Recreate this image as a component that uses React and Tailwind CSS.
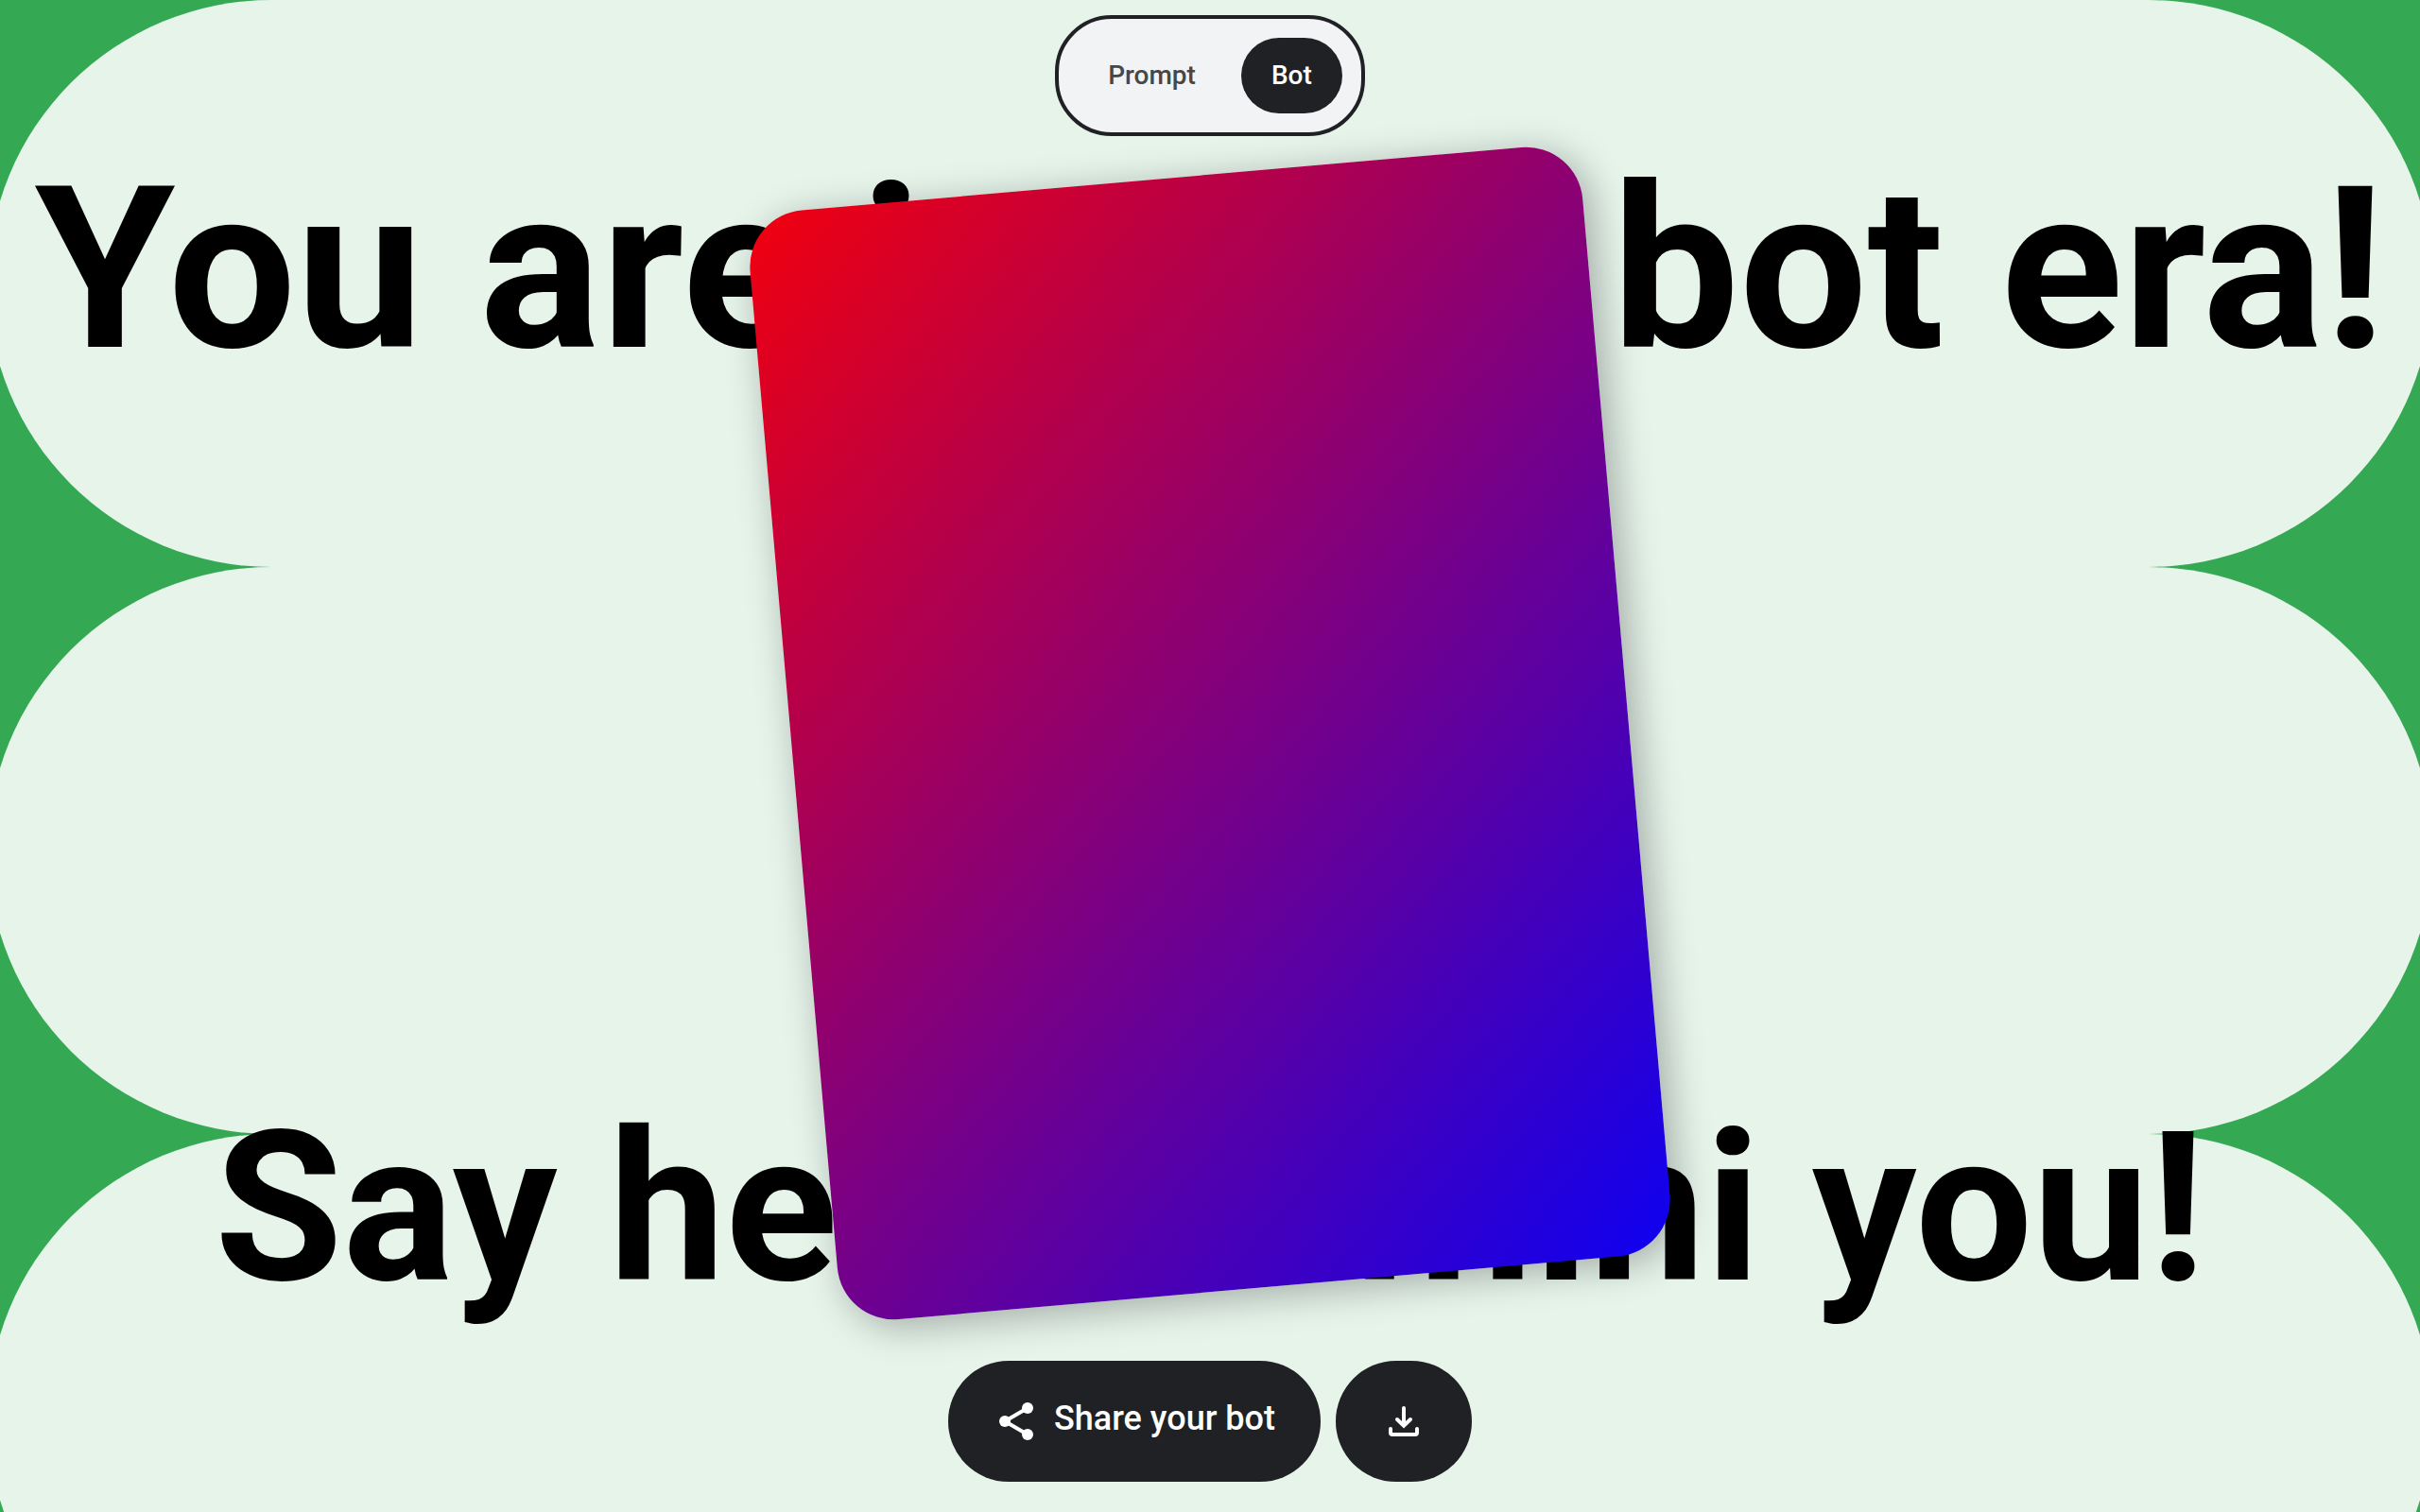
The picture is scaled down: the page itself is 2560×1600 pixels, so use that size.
function ShareIcon() {
  return (
    <svg viewBox="0 0 24 24" className="size-12 shrink-0" fill="none" aria-hidden="true">
      <path d="M18 5 6 12l12 7" stroke="currentColor" strokeWidth="2" />
      <circle cx="18" cy="5" r="3" fill="currentColor" />
      <circle cx="6" cy="12" r="3" fill="currentColor" />
      <circle cx="18" cy="19" r="3" fill="currentColor" />
    </svg>
  );
}

function DownloadIcon() {
  return (
    <svg
      viewBox="0 0 24 24"
      className="size-12"
      fill="none"
      stroke="currentColor"
      strokeWidth="2"
      strokeLinecap="round"
      aria-hidden="true"
    >
      <path d="M12 5v9M8.5 11l3.5 3.4 3.5-3.4" />
      <path d="M5 16v2q0 1 1 1h12q1 0 1-1v-2" />
    </svg>
  );
}

function Backdrop() {
  return (
    <div className="col-start-1 row-start-1 -mx-[0.5%] flex flex-col overflow-hidden">
      <div className="h-[600px] shrink-0 rounded-full bg-[#e6f4ea]" />
      <div className="h-[600px] shrink-0 rounded-full bg-[#e6f4ea]" />
      <div className="h-[600px] shrink-0 rounded-full bg-[#e6f4ea]" />
    </div>
  );
}

export default function App() {
  return (
    <main className="grid h-screen grid-cols-1 grid-rows-1 overflow-hidden bg-[#34a853] font-['Roboto',sans-serif]">
      <Backdrop />

      <div className="col-start-1 row-start-1 flex min-h-0 flex-col items-center justify-between pt-[165px] pb-[211px] font-bold whitespace-nowrap text-black">
        <h1 className="text-[240px] leading-none">You are in your bot era!</h1>
        <h2 className="text-[220px] leading-none">Say hello to mini you!</h2>
      </div>

      <div className="col-start-1 row-start-1 flex min-h-0 items-center justify-center pb-[49px]">
        <div className="aspect-[3/4] h-[1178px] -rotate-5 rounded-[60px] bg-[linear-gradient(135deg,#ff0000_-6%,#0000ff_106%)] shadow-[8px_8px_40px_rgba(0,0,0,0.3)]" />
      </div>

      <div className="relative col-start-1 row-start-1 flex min-h-0 flex-col items-center justify-between pt-4 pb-8 font-medium">
        <nav className="flex gap-4 rounded-[60px] border-4 border-[#202124] bg-[#f1f3f4] p-5 text-[28px] leading-10">
          <button type="button" className="rounded-full px-8 py-5 text-[#474747]">
            Prompt
          </button>
          <button type="button" className="rounded-full bg-[#202124] px-8 py-5 text-white">
            Bot
          </button>
        </nav>

        <div className="flex gap-4 text-white">
          <button
            type="button"
            className="flex h-32 items-center gap-4 rounded-full bg-[#202124] px-12 text-[36px] leading-12"
          >
            <ShareIcon />
            <span className="pb-1.5">Share your bot</span>
          </button>
          <button
            type="button"
            aria-label="Download"
            className="flex h-32 items-center rounded-full bg-[#202124] px-12"
          >
            <DownloadIcon />
          </button>
        </div>
      </div>
    </main>
  );
}
